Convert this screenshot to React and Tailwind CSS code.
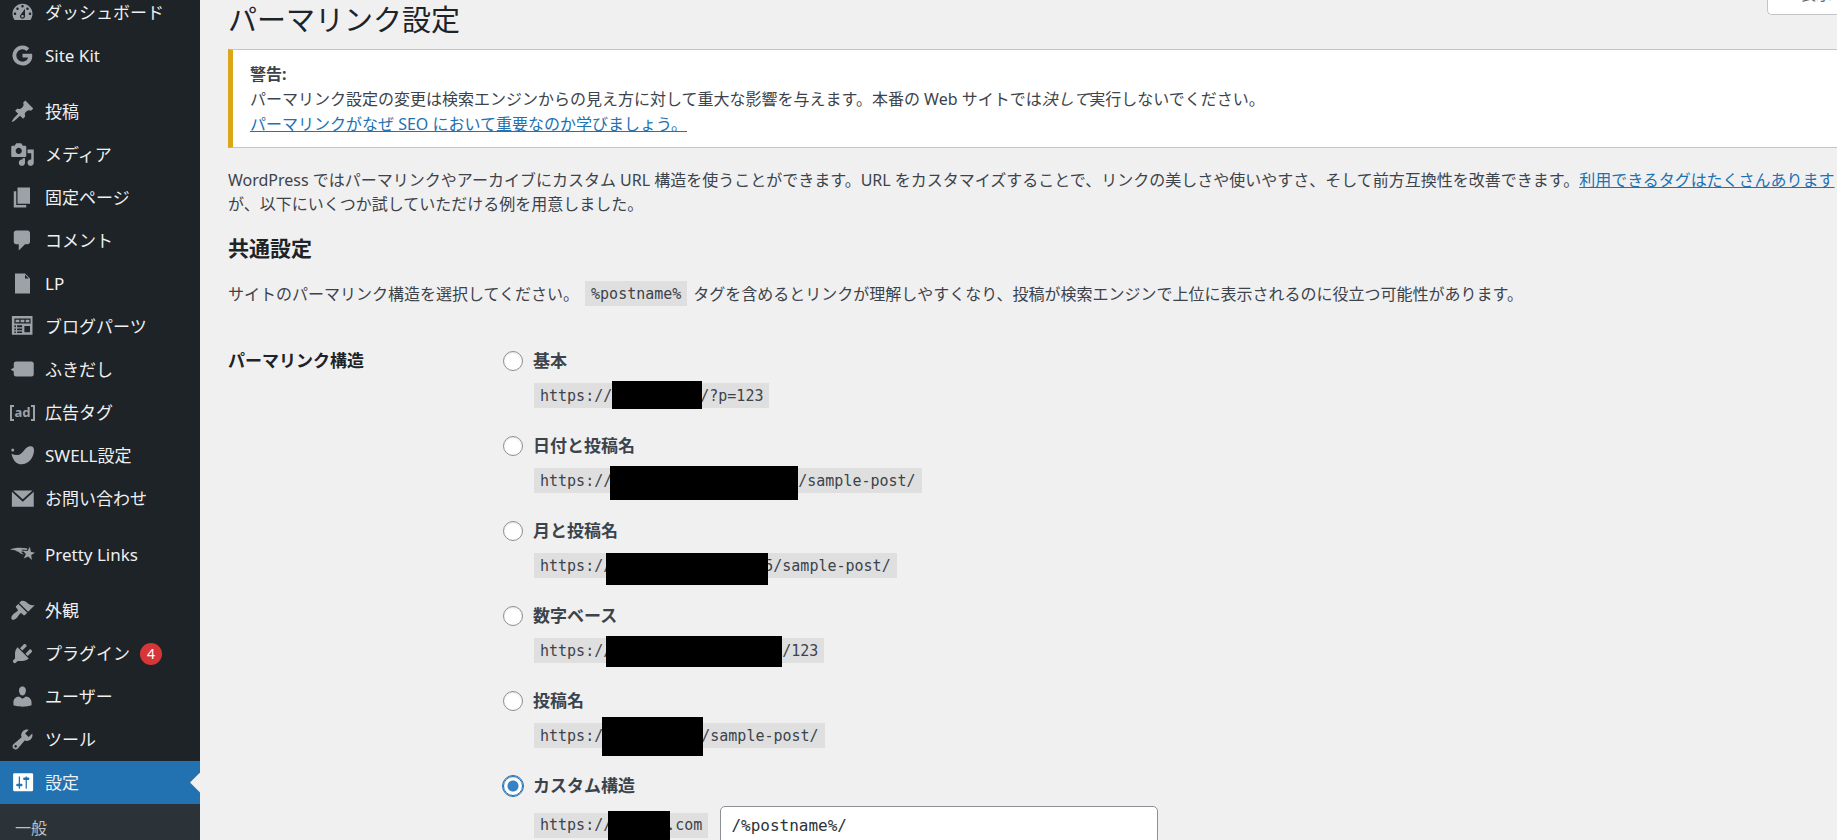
const ICONS = {
  dashboard: 'M3.76 16h12.48c1.1-1.37 1.76-3.11 1.76-5 0-4.42-3.58-8-8-8s-8 3.58-8 8c0 1.89.66 3.63 1.76 5zM10 4c.55 0 1 .45 1 1s-.45 1-1 1-1-.45-1-1 .45-1 1-1zM6 6c.55 0 1 .45 1 1s-.45 1-1 1-1-.45-1-1 .45-1 1-1zm8 0c.55 0 1 .45 1 1s-.45 1-1 1-1-.45-1-1 .45-1 1-1zm-5.37 5.55L12 7v6c0 1.1-.9 2-2 2s-2-.9-2-2c0-.57.24-1.08.63-1.45zM4 10c.55 0 1 .45 1 1s-.45 1-1 1-1-.45-1-1 .45-1 1-1zm12 0c.55 0 1 .45 1 1s-.45 1-1 1-1-.45-1-1 .45-1 1-1zm-5 3c0-.55-.45-1-1-1s-1 .45-1 1 .45 1 1 1 1-.45 1-1z',
  siteKit: 'M17.6 8.6H10v3h4.5c-.5 1.9-2.1 3.3-4.5 3.3a4.9 4.9 0 1 1 3.2-8.6l2.2-2.2A8 8 0 1 0 10 18c4.6 0 7.8-3.2 7.8-7.7 0-.6-.1-1.2-.2-1.7z',
  post: 'M10.44 3.02l1.82-1.82 6.36 6.35-1.83 1.82c-1.05-.68-2.48-.57-3.41.36l-.75.75c-.92.93-1.04 2.35-.35 3.41l-1.83 1.82-2.41-2.41-2.8 2.79c-.42.42-3.38 2.71-3.8 2.29s1.86-3.39 2.28-3.81l2.79-2.79L4.1 9.36l1.83-1.82c1.05.69 2.48.57 3.4-.36l.75-.75c.93-.92 1.05-2.35.36-3.41z',
  media: 'M13 11V4c0-.55-.45-1-1-1h-1.67L9 1H5L3.67 3H2c-.55 0-1 .45-1 1v7c0 .55.45 1 1 1h10c.55 0 1-.45 1-1zM7 4.5c1.38 0 2.5 1.12 2.5 2.5S8.38 9.5 7 9.5 4.5 8.38 4.5 7 5.62 4.5 7 4.5zM14 6h5v10.5c0 1.38-1.12 2.5-2.5 2.5S14 17.88 14 16.5s1.12-2.5 2.5-2.5c.17 0 .34.02.5.05V9h-3V6zm-4 8.05V13h2v3.5c0 1.38-1.12 2.5-2.5 2.5S7 17.88 7 16.5 8.12 14 9.5 14c.17 0 .34.02.5.05z',
  page: 'M6 15V2h10v13H6zm-1 1h8v2H3V5h2v11z',
  comment: 'M5 2h9c1.1 0 2 .9 2 2v7c0 1.1-.9 2-2 2h-2l-5 5v-5H5c-1.1 0-2-.9-2-2V4c0-1.1.9-2 2-2z',
  file: 'M12 2l4 4v12H4V2h8zm0 4h3l-3-3v3z',
  blocks: 'M1.5 1.5H18v15H1.5zM3.5 3.5v4h13v-4zM4.5 4.5h3v2h-3zm4 0h3v2h-3zm4 0h3v2h-3zM3.5 9v1.5h1.2V9zm2.2 0v1.5h4V9zm-2.2 2.5V13h1.2v-1.5zm2.2 0V13h4v-1.5zM3.5 14v1.2h1.2V14zm2.2 0v1.2h4V14zm5.800-4.5H16v5h-4.5z',
  balloon: 'M4.5 3.5H17a2 2 0 0 1 2 2v8a2 2 0 0 1-2 2H5a2 2 0 0 1-2-2v-2L.5 10 3 8.5v-3a2 2 0 0 1 1.5-2z',
  swell: 'M2.2 4.3a1.2 1.2 0 1 1 0 2.4 1.2 1.2 0 0 1 0-2.4zM1.2 8.5c3.500 2 7 1.5 9.3-1.7C12 4.7 13.8 2.5 16.5 2.5c2 0 2.9 1.5 2.7 3.8-.5 6-4.7 10.7-10 10.7-4.2 0-7-3.5-8-8.5z',
  mail: 'M2.5 3.5H18l-7.8 7zM1.500 4.5v12H19v-12l-8.8 8z',
  star: 'M15.97 3.8l.68 3.9 3.35.8-3 1.9.45 3.9-2.85-2.7-3.6 1.6 1.7-3.6-2.65-2.900L14 7.200zM0 6C3 4.6 9 4.2 14 5.2l-.5 1.2L9.200 6l1.500 2-2.200-.4 2.600 2.600L7 8.600l1-.4L4 7l1.500-.3z',
  appearance: 'M14.48 11.06L7.41 3.99l1.5-1.5c.5-.56 2.3-.47 3.51.32 1.21.8 1.43 1.28 2.91 2.1 1.18.64 2.45 1.26 4.45.85zm-.71.71L6.7 4.7 4.93 6.47c-.39.39-.39 1.02 0 1.41l1.06 1.06c.39.39.39 1.03 0 1.42-.6.6-1.43 1.11-2.21 1.69-.35.26-.7.53-1.01.84C1.43 14.23.4 16.08 1.4 17.07c.99 1 2.84-.03 4.18-1.36.31-.31.58-.66.85-1.02.57-.78 1.08-1.61 1.69-2.21.39-.39 1.02-.39 1.41 0l1.06 1.06c.39.39 1.02.39 1.41 0z',
  plugins: 'M13.11 4.36L9.87 7.6 8 5.73l3.24-3.24c.35-.34 1.05-.2 1.56.32.52.51.66 1.21.31 1.55zm-8 1.77l.91-1.12 9.01 9.01-1.19.84c-.71.71-2.63 1.16-3.82 1.16H6.14L4.9 17.26c-.59.59-1.54.59-2.12 0-.59-.58-.59-1.53 0-2.12l1.24-1.24v-3.88c0-1.13.4-3.19 1.09-3.89zm7.26 3.97l3.24-3.24c.34-.35 1.04-.21 1.55.31.52.51.66 1.21.31 1.55l-3.24 3.25z',
  users: 'M10 9.25c-2.27 0-2.73-3.44-2.73-3.44C7 4.02 7.82 2 9.97 2c2.16 0 2.98 2.02 2.71 3.81 0 0-.41 3.44-2.68 3.44zm0 2.57L12.72 10c2.39 0 4.52 2.33 4.52 4.53v2.49s-3.65 1.13-7.24 1.13c-3.65 0-7.24-1.13-7.24-1.13v-2.49c0-2.25 1.94-4.48 4.47-4.48z',
  tools: 'M16.68 9.77c-1.34 1.34-3.3 1.67-4.95.99l-5.41 6.52c-.99.99-2.59.99-3.58 0s-.99-2.59 0-3.57l6.52-5.42c-.68-1.65-.35-3.61.99-4.95 1.28-1.28 3.12-1.62 4.72-1.06l-2.89 2.89 2.82 2.82 2.86-2.87c.53 1.58.18 3.39-1.08 4.65zM3.81 16.21c.4.39 1.04.39 1.43 0 .4-.4.4-1.04 0-1.43-.39-.4-1.03-.4-1.43 0-.39.39-.39 1.03 0 1.43z',
  settings: 'M18.5 16V3.500a1 1 0 0 0-1-1h-14a1 1 0 0 0-1 1V16a1 1 0 0 0 1 1h14a1 1 0 0 0 1-1zM8 11h1c.55 0 1 .45 1 1s-.45 1-1 1H8v1.500c0 .28-.22.5-.5.5s-.5-.22-.5-.5V13H6c-.55 0-1-.45-1-1s.45-1 1-1h1V5.500c0-.28.22-.5.5-.5s.5.22.5.5V11zm5.500-3h1c.55 0 1-.45 1-1s-.45-1-1-1h-1v-.5c0-.28-.22-.5-.5-.5s-.5.22-.5.5V6h-1c-.55 0-1 .45-1 1s.45 1 1 1h1v6.500c0 .28.22.5.5.5s.5-.22.5-.5z',
};

const GROUPS = [
  [['dashboard', 'ダッシュボード'], ['siteKit', 'Site Kit']],
  [
    ['post', '投稿'], ['media', 'メディア'], ['page', '固定ページ'], ['comment', 'コメント'], ['file', 'LP'],
    ['blocks', 'ブログパーツ'], ['balloon', 'ふきだし'], ['ad', '広告タグ'], ['swell', 'SWELL設定'], ['mail', 'お問い合わせ'],
  ],
  [['star', 'Pretty Links']],
  [['appearance', '外観'], ['plugins', 'プラグイン', 4], ['users', 'ユーザー'], ['tools', 'ツール'], ['settings', '設定']],
];

function Icon({ name }) {
  if (name === 'ad') {
    return (
      <span className="flex w-[25px] shrink-0 items-center justify-between text-[13px] font-bold leading-none">
        <span className="h-4 w-1 border-y-2 border-l-2 border-current" />
        ad
        <span className="h-4 w-1 border-y-2 border-r-2 border-current" />
      </span>
    );
  }
  return (
    <svg viewBox="0 0 20 20" className="size-[25px] shrink-0" fill="currentColor" fillRule="evenodd" aria-hidden="true">
      <path d={ICONS[name]} />
    </svg>
  );
}

function MenuItem({ icon, label, count }) {
  const current = icon === 'settings';
  return (
    <li>
      <a
        href="#"
        aria-current={current ? 'page' : undefined}
        className={`relative flex h-[43px] items-center gap-[10px] pl-[10px] ${current ? 'bg-[#2271b1] text-white' : 'text-[#9ca2a7]'}`}
      >
        <Icon name={icon} />
        <span className="text-[#f0f0f1]">{label}</span>
        {count && (
          <span className="flex size-[22px] items-center justify-center rounded-full bg-[#d63638] text-sm text-white">{count}</span>
        )}
        {current && (
          <span className="absolute right-0 h-5 w-[10px] bg-[#f0f0f1] [clip-path:polygon(100%_0,0_50%,100%_100%)]" />
        )}
      </a>
    </li>
  );
}

function Sidebar() {
  return (
    <nav className="-mt-[9px] w-[200px] shrink-0 bg-[#1d2327] text-[17px] leading-6">
      <div className="flex flex-col gap-[13px]">
        {GROUPS.map((group, i) => (
          <ul key={i}>
            {group.map(([icon, label, count]) => (
              <MenuItem key={label} icon={icon} label={label} count={count} />
            ))}
          </ul>
        ))}
      </div>
      <ul className="h-24 bg-[#2c3338] pt-3 text-base">
        <li><a href="#" className="block px-[15px] text-[#bfc1c3]">一般</a></li>
      </ul>
    </nav>
  );
}

const CODE = 'flex h-[25px] items-center bg-[#dfdfe0] px-[6px] font-["DejaVu_Sans_Mono",monospace] text-[15px]';

const OPTIONS = [
  { id: 'plain', label: '基本', bar: '-mt-[2px] -mr-[2px] h-7 w-[90px]', after: '/?p=123' },
  { id: 'day', label: '日付と投稿名', bar: '-mt-[2px] -ml-[2px] h-[34px] w-[188px]', after: '/sample-post/' },
  { id: 'month', label: '月と投稿名', bar: '-ml-[6px] -mr-[4px] h-8 w-[162px]', after: '5/sample-post/' },
  { id: 'numeric', label: '数字ベース', bar: '-mt-[2px] -ml-[6px] h-[31px] w-[176px]', after: '/123' },
  { id: 'name', label: '投稿名', bar: '-mt-[6px] -ml-[10px] -mr-[2px] h-[39px] w-[101px]', after: '/sample-post/' },
  { id: 'custom', label: 'カスタム構造', bar: '-mt-[2px] -ml-[4px] -mr-[4px] h-8 w-[62px]', after: '.com' },
];

function Option({ option }) {
  const custom = option.id === 'custom';
  return (
    <div className="h-[85px]">
      <div className="flex h-6 items-center gap-[10px]">
        <input
          type="radio"
          name="structure"
          id={option.id}
          defaultChecked={custom}
          className="size-5 shrink-0 appearance-none rounded-full border border-[#8c8f94] bg-white shadow-[inset_0_1px_2px_rgba(0,0,0,0.1)] checked:border-[#2271b1] checked:bg-[radial-gradient(circle,#3582c4_5px,white_6px)] checked:outline checked:outline-[#2271b1]"
        />
        <label htmlFor={option.id} className="text-[17px] font-bold">{option.label}</label>
      </div>
      <div className={`ml-[31px] flex items-center gap-3 ${custom ? 'mt-2' : 'mt-[10px]'}`}>
        <code className={CODE}>
          https://
          <span className={`relative self-start bg-black ${option.bar}`} />
          {option.after}
        </code>
        {custom && (
          <input
            type="text"
            aria-label="カスタム構造"
            defaultValue="/%postname%/"
            className='h-[38px] w-[438px] rounded-[5px] border border-[#8c8f94] bg-white px-[10px] font-["DejaVu_Sans_Mono",monospace] text-base text-[#2c3338]'
          />
        )}
      </div>
    </div>
  );
}

export default function App() {
  return (
    <div className='flex h-screen overflow-hidden bg-[#f0f0f1] font-["Noto_Sans","Noto_Sans_CJK_JP",sans-serif] text-base leading-6 text-[#3c434a]'>
      <Sidebar />
      <main className="relative min-w-0 grow pl-7">
        <button type="button" className="absolute right-0 top-0 flex h-[15px] w-[70px] items-end overflow-hidden whitespace-nowrap rounded-bl-[5px] border-b border-l border-[#c3c4c7] bg-white pb-2 pl-8 text-[#646970]">
          表示
        </button>
        <h1 className="text-[29px] leading-10 text-[#1d2327]">パーマリンク設定</h1>
        <div className="mt-[9px] border-y border-l-[5px] border-y-[#c3c4c7] border-l-[#dba617] bg-white pb-[10px] pl-[17px] pt-3 leading-[25px]">
          <p className="font-bold">警告:</p>
          <p>パーマリンク設定の変更は検索エンジンからの見え方に対して重大な影響を与えます。本番の Web サイトでは<em>決して</em>実行しないでください。</p>
          <p><a href="#" className="text-[#2271b1] underline">パーマリンクがなぜ SEO において重要なのか学びましょう。</a></p>
        </div>
        <p className="mt-5 whitespace-nowrap">
          WordPress ではパーマリンクやアーカイブにカスタム URL 構造を使うことができます。URL をカスタマイズすることで、リンクの美しさや使いやすさ、そして前方互換性を改善できます。
          <a href="#" className="text-[#2271b1] underline">利用できるタグはたくさんあります</a>
          <br />
          が、以下にいくつか試していただける例を用意しました。
        </p>
        <h2 className="mt-[18px] text-[21px] font-bold leading-7 text-[#1d2327]">共通設定</h2>
        <p className="mt-[19px] flex items-center gap-[6px] whitespace-nowrap">
          サイトのパーマリンク構造を選択してください。
          <code className={CODE}>%postname%</code>
          タグを含めるとリンクが理解しやすくなり、投稿が検索エンジンで上位に表示されるのに役立つ可能性があります。
        </p>
        <fieldset className="mt-[43px] flex">
          <div className="w-[275px] shrink-0 text-[17px] font-bold text-[#1d2327]">パーマリンク構造</div>
          <div>
            {OPTIONS.map((option) => <Option key={option.id} option={option} />)}
          </div>
        </fieldset>
      </main>
    </div>
  );
}
